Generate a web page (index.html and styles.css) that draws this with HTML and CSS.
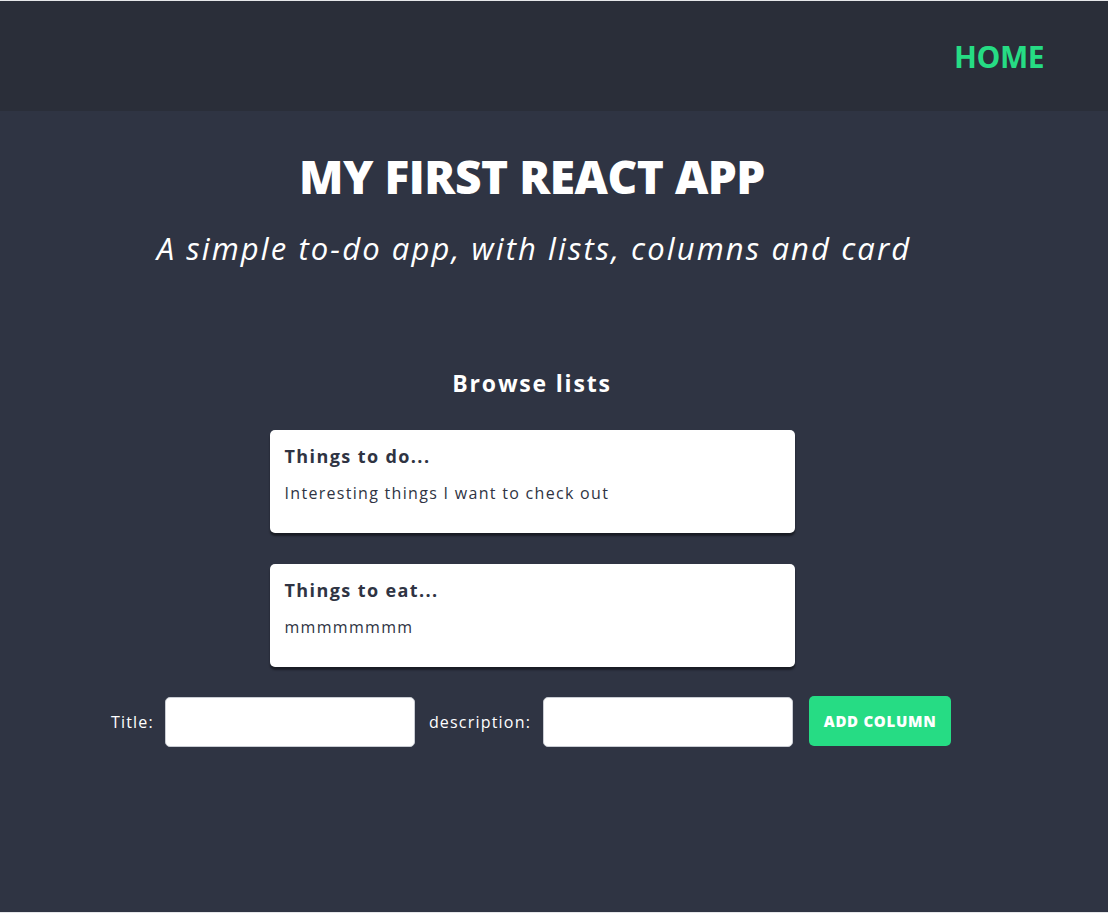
FILE: index.html
```html
<!DOCTYPE html>
<html lang="en">
<head>
<meta charset="utf-8">
<title>My first React app</title>
<link rel="stylesheet" href="styles.css">
</head>
<body>
<div class="app">
  <header class="topbar">
    <a class="nav-home" href="#">HOME</a>
  </header>
  <main class="content">
    <h1 class="hero-title">MY FIRST REACT APP</h1>
    <p class="hero-sub">A simple to-do app, with lists, columns and card</p>
    <h2 class="browse">Browse lists</h2>
    <div class="lists">
      <div class="card">
        <h3 class="card-title">Things to do...</h3>
        <p class="card-desc">Interesting things I want to check out</p>
      </div>
      <div class="card">
        <h3 class="card-title">Things to eat...</h3>
        <p class="card-desc">mmmmmmmm</p>
      </div>
    </div>
    <form class="add-form">
      <label class="field-label label-title">Title:</label>
      <input class="field-input" type="text">
      <label class="field-label label-desc">description:</label>
      <input class="field-input" type="text">
      <button class="add-btn" type="button">ADD COLUMN</button>
    </form>
  </main>
</div>
</body>
</html>
```
FILE: styles.css
```css
html, body {
  margin: 0;
  padding: 0;
}
body {
  background: #e6e7ea;
  font-family: "Open Sans", "Liberation Sans", sans-serif;
  padding-top: 1px;
}
.app {
  height: 911px;
  background: #2f3443;
  display: flex;
  flex-direction: column;
}
.topbar {
  height: 110px;
  background: #2a2e39;
  display: flex;
  justify-content: flex-end;
  align-items: center;
  padding-right: 64px;
  box-sizing: border-box;
}
.nav-home {
  color: #26dc84;
  text-decoration: none;
  font-weight: 700;
  font-size: 30px;
  letter-spacing: -0.5px;
}
.content {
  width: 1064px;
  display: flex;
  flex-direction: column;
  align-items: center;
  color: #ffffff;
}
.hero-title {
  margin: 37px 0 0;
  font-size: 46px;
  line-height: 56px;
  font-weight: 800;
  letter-spacing: -0.5px;
}
.hero-sub {
  margin: 24px 0 0;
  font-size: 31px;
  line-height: 40px;
  font-style: italic;
  font-weight: 400;
  letter-spacing: 2.1px;
  padding-left: 4px;
}
.browse {
  margin: 100px 0 0;
  font-size: 23px;
  line-height: 30px;
  font-weight: 700;
  letter-spacing: 1.8px;
}
.lists {
  margin-top: 32px;
  display: flex;
  flex-direction: column;
  gap: 31px;
}
.card {
  width: 525px;
  height: 103px;
  box-sizing: border-box;
  background: #ffffff;
  border-radius: 5px;
  box-shadow: 0 3px 2px rgba(0, 0, 0, 0.45);
  padding: 13px 15px;
  color: #2f3443;
}
.card-title {
  margin: 0;
  font-size: 18px;
  line-height: 26px;
  font-weight: 700;
  letter-spacing: 1.4px;
}
.card-desc {
  margin: 13px 0 0;
  font-size: 16px;
  line-height: 22px;
  font-weight: 400;
  letter-spacing: 1.3px;
}
.add-form {
  margin-top: 30px;
  display: flex;
  align-items: center;
  padding-right: 2px;
}
.field-label {
  font-size: 16px;
  color: #ffffff;
  letter-spacing: 1.2px;
}
.label-title {
  margin-right: 11px;
}
.label-desc {
  margin-right: 12px;
}
.field-input {
  width: 250px;
  height: 50px;
  box-sizing: border-box;
  border: 1px solid #c9ccd3;
  border-radius: 5px;
  background: #ffffff;
  margin-right: 14px;
  padding: 0 10px;
  font: inherit;
}
.field-input:last-of-type {
  margin-right: 16px;
}
.add-btn {
  width: 142px;
  height: 50px;
  margin-top: -2px;
  border: none;
  border-radius: 5px;
  background: #26dc84;
  color: #ffffff;
  font-family: inherit;
  font-size: 15px;
  font-weight: 800;
  letter-spacing: 0.7px;
  cursor: pointer;
}
```
